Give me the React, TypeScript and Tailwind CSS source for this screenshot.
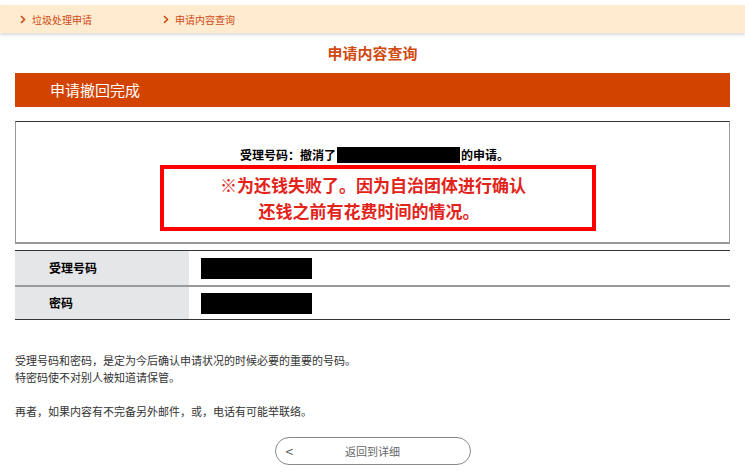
const font = { fontFamily: '"Noto Sans CJK SC", "Noto Sans", sans-serif' };

const Chevron = () => (
  <svg width="6" height="9" viewBox="0 0 6 9" className="mr-[6px]">
    <path d="M1 1l3.5 3.5L1 8" fill="none" stroke="#d04a12" strokeWidth="1.6" />
  </svg>
);

const rows = ['受理号码', '密码'];

export default function App() {
  return (
    <div className="min-h-[472px] w-[745px] bg-white pt-[5px] text-[#333]" style={font}>
      <nav className="flex h-[28px] items-center bg-[#feebd0] pl-[20px] text-[10px] text-[#d04a12] shadow-[0_2px_3px_rgba(0,0,0,0.15)]">
        <div className="flex w-[143px] items-center">
          <Chevron />
          垃圾处理申请
        </div>
        <div className="flex items-center">
          <Chevron />
          申请内容查询
        </div>
      </nav>

      <h1 className="mt-[8px] text-center text-[15px] font-bold leading-[24px] text-[#d04a12]">申请内容查询</h1>

      <div className="mx-[15px] mt-[8px]">
        <div className="flex h-[34px] items-center bg-[#d24300] pl-[35px] text-[15px] text-white">申请撤回完成</div>

        <div className="mt-[14px] flex h-[123px] flex-col items-center border-x border-t border-b-2 border-x-[#999] border-t-[#333] border-b-[#999] pt-[25px]">
          <p className="ml-[4px] flex items-center text-[12px] font-bold leading-[16px] text-black">
            受理号码：撤消了
            <span className="mx-[1px] inline-block h-[16px] w-[123px] bg-black" />
            的申请。
          </p>
          <div className="ml-[11px] mt-[2px] flex h-[66px] w-[436px] flex-col items-center justify-center border-4 border-[#ff0000] text-[17px] font-bold leading-[26px] text-[#e2231a]">
            <span className="mr-[10px]">※为还钱失败了。因为自治团体进行确认</span>
            <span className="mr-[18px]">还钱之前有花费时间的情况。</span>
          </div>
        </div>

        <div className="mt-[6px] border-y border-[#333] text-[12px] font-bold text-black">
          {rows.map((label, i) => (
            <div key={label} className={`flex h-[34px] ${i > 0 ? 'border-t-2 border-[#999]' : ''}`}>
              <div className="flex w-[174px] items-center bg-[#e5e6e8] pl-[34px]">{label}</div>
              <div className="flex items-center pl-[12px]">
                <span className="inline-block h-[21px] w-[111px] bg-black" />
              </div>
            </div>
          ))}
        </div>

        <div className="mt-[32px] text-[11px] leading-[17px] text-[#333]">
          <p>受理号码和密码，是定为今后确认申请状况的时候必要的重要的号码。</p>
          <p>特密码使不对别人被知道请保管。</p>
          <p className="mt-[17px]">再者，如果内容有不完备另外邮件，或，电话有可能举联络。</p>
        </div>

        <div className="mt-[17px] flex justify-center">
          <button
            type="button"
            className="relative flex h-[28px] w-[196px] items-center justify-center rounded-full border border-[#888] text-[11px] text-[#666]"
          >
            <span className="absolute left-[10px] text-[14px] leading-none text-[#555]">&lt;</span>
            返回到详细
          </button>
        </div>
      </div>
    </div>
  );
}
